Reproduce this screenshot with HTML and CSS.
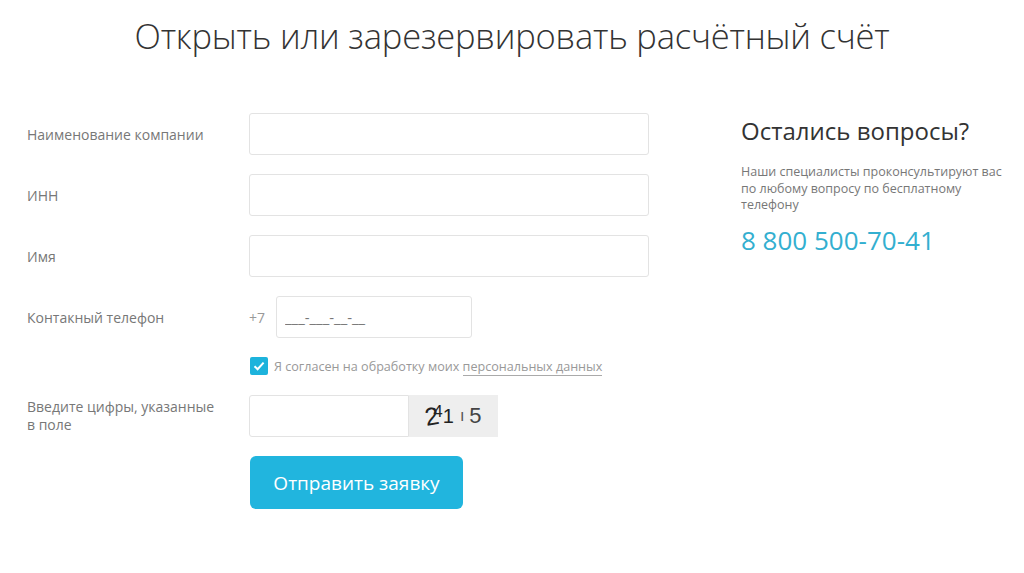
FILE: index.html
```html
<!DOCTYPE html>
<html>
<head>
    <meta charset="utf-8">
    <link rel="stylesheet" href="styles.css">
</head>
<body>
    <h1 class="title">Открыть или зарезервировать расчётный счёт</h1>
    <div class="content">
        <form class="form">
            <div class="row">
                <label class="label">Наименование компании</label>
                <input class="field" type="text">
            </div>
            <div class="row">
                <label class="label">ИНН</label>
                <input class="field" type="text">
            </div>
            <div class="row">
                <label class="label">Имя</label>
                <input class="field" type="text">
            </div>
            <div class="row">
                <label class="label">Контакный телефон</label>
                <span class="prefix">+7</span>
                <input class="field phone" type="text" value="___-___-__-__">
            </div>
            <div class="row agree-row">
                <span class="label"></span>
                <span class="check">
                    <svg width="12" height="10" viewBox="0 0 12 10"><path d="M1.5 5.2 L4.6 8.2 L10.6 1.6" fill="none" stroke="#fff" stroke-width="2"/></svg>
                </span>
                <span class="agree">Я согласен на обработку моих <a href="#">персональных данных</a></span>
            </div>
            <div class="row">
                <label class="label"><span class="two-line">Введите цифры, указанные в поле</span></label>
                <input class="field captcha" type="text">
                <div class="captcha-img"><span class="c1">2</span><span class="c2">4</span><span class="c3">1</span><span class="c4">ı</span><span class="c5">5</span></div>
            </div>
            <div class="row">
                <span class="label"></span>
                <button class="submit" type="button">Отправить заявку</button>
            </div>
        </form>
        <aside class="help">
            <h2>Остались вопросы?</h2>
            <p>Наши специалисты проконсультируют вас по любому вопросу по бесплатному телефону</p>
            <div class="phone-number">8 800 500-70-41</div>
        </aside>
    </div>
</body>
</html>
```

FILE: styles.css
```css
body {
    margin: 0;
    background: #fff;
    font-family: 'Open Sans', 'Noto Sans', sans-serif;
    color: #666;
}

.title {
    margin: 14px 0 0;
    text-align: center;
    font-weight: 300;
    font-size: 34.5px;
    line-height: 44px;
    color: #333;
    letter-spacing: -0.2px;
}

.content {
    display: flex;
    padding: 55px 0 0 27px;
}

.form {
    width: 640px;
}

.row {
    display: flex;
    align-items: center;
    margin-bottom: 19px;
}

.label {
    width: 222px;
    flex-shrink: 0;
    font-size: 14px;
    color: #777;
}

.two-line {
    display: block;
    width: 195px;
    line-height: 18px;
}

.field {
    width: 400px;
    height: 42px;
    box-sizing: border-box;
    border: 1px solid #e3e3e3;
    border-radius: 3px;
    padding: 0 8px;
    font-family: inherit;
    font-size: 15px;
    color: #777;
    outline: none;
}

.prefix {
    width: 27px;
    font-size: 14px;
    color: #999;
}

.field.phone {
    width: 196px;
}

.agree-row {
    margin: 2px 0 20px;
}

.check {
    width: 18px;
    height: 18px;
    margin-left: 1px;
    background: #1db3dc;
    border-radius: 2px;
    display: flex;
    align-items: center;
    justify-content: center;
}

.agree {
    margin-left: 6px;
    font-size: 12.6px;
    color: #999;
}

.agree a {
    color: #999;
    text-decoration: none;
    border-bottom: 1px solid #aaa;
}

.field.captcha {
    width: 160px;
    border-radius: 3px 0 0 3px;
}

.captcha-img {
    width: 89px;
    height: 42px;
    background: #eee;
    display: flex;
    align-items: center;
    justify-content: center;
    font-family: 'Liberation Sans', sans-serif;
    font-size: 25px;
    color: #222;
}

.c1 { transform: rotate(-10deg); }
.c2 { font-size: 17px; margin-left: -6px; transform: translateY(-4px); }
.c3 { font-size: 20px; }
.c4 { font-size: 16px; margin: 0 5px 0 6px; color: #555; }
.c5 { font-size: 22px; color: #444; }

.submit {
    width: 213px;
    height: 53px;
    margin-left: 1px;
    border: none;
    border-radius: 6px;
    background: #21b5de;
    color: #fff;
    font-family: 'Open Sans', sans-serif;
    font-size: 19px;
}

.help {
    margin-left: 74px;
    margin-top: 1px;
    width: 275px;
}

.help h2 {
    margin: 0;
    font-weight: 400;
    font-size: 24px;
    color: #333;
}

.help p {
    margin: 17px 0 0;
    font-size: 12.5px;
    line-height: 16.5px;
    color: #777;
}

.phone-number {
    margin-top: 8px;
    font-size: 26px;
    color: #33afd0;
}
```
